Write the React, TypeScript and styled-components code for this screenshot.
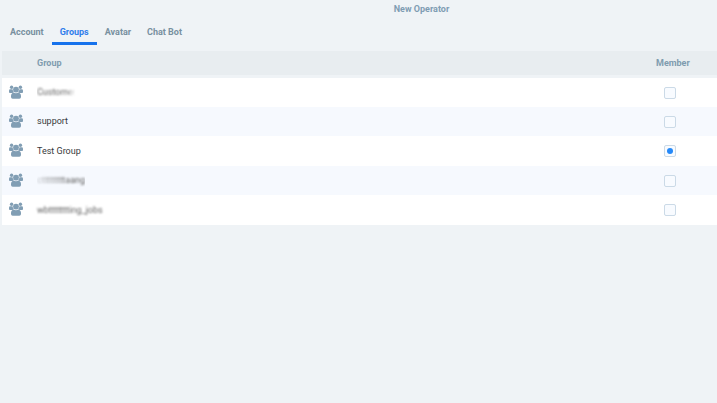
import React, { useState } from "react";
import styled, { createGlobalStyle } from "styled-components";

const GlobalStyle = createGlobalStyle`
  body {
    margin: 0;
    background: #eff3f6;
    font-family: Roboto, sans-serif;
    font-size: 9px;
  }
`;

const Page = styled.main`
  display: flex;
  flex-direction: column;
  overflow-x: hidden;
`;

const Title = styled.h1`
  margin: 0;
  padding: 3px 0 0 126px;
  font-size: 9px;
  line-height: 13px;
  font-weight: 700;
  text-align: center;
  color: #7f9db3;
`;

const Tabs = styled.nav`
  display: flex;
  padding: 4px 0 0 2px;
`;

const Tab = styled.button<{ $active: boolean }>`
  padding: 6px 8px 3px;
  border: 0;
  border-bottom: 3px solid ${(p) => (p.$active ? "#1672ec" : "transparent")};
  background: none;
  font: 700 9px/13px Roboto, sans-serif;
  color: ${(p) => (p.$active ? "#2f7deb" : "#78909f")};
  cursor: pointer;
`;

const Table = styled.table`
  width: calc(100% - 2px);
  margin: 6px 0 0 2px;
  border-collapse: separate;
  border-spacing: 0;
  table-layout: fixed;
`;

const HeadCell = styled.th<{ $width?: number }>`
  width: ${(p) => (p.$width ? `${p.$width}px` : "auto")};
  height: 24px;
  padding: 0;
  border-bottom: 3px solid #eff3f6;
  background: #e8edf0;
  color: #7f9caf;
  font-weight: 700;
  text-align: left;
`;

const Row = styled.tr<{ $tall: boolean }>`
  height: ${(p) => (p.$tall ? 30 : 29)}px;
  background: #fff;
  &:nth-child(even) {
    background: #f6f9fe;
  }
`;

const Cell = styled.td`
  padding: 0;
  line-height: 13px;
  color: #38393b;
`;

const IconCell = styled(Cell)`
  padding: 0 0 2px 7px;
`;

const MemberCell = styled(Cell)`
  padding-left: 8px;
`;

const Label = styled.label`
  display: inline-block;
`;

const Masked = styled(Label)<{ $fade: string }>`
  color: #606060;
  filter: blur(1px);
  mask-image: ${(p) => p.$fade};
`;

const Check = styled.input`
  appearance: none;
  display: grid;
  place-items: center;
  box-sizing: border-box;
  width: 12px;
  height: 12px;
  margin: 0;
  border: 1px solid #cbdae7;
  border-radius: 2px;
  background: #f8fbff;
  &:checked::before {
    content: "";
    width: 6px;
    height: 6px;
    border-radius: 50%;
    background: #2589f8;
  }
`;

const Icon = styled.svg`
  display: block;
  width: 14px;
  height: 14px;
  fill: #819eb4;
`;

const GroupIcon = () => (
  <Icon viewBox="0 0 14 14" aria-hidden="true">
    <circle cx="2.6" cy="2.3" r="1.7" />
    <circle cx="11.4" cy="2.3" r="1.7" />
    <path d="M0 6.900V5.700Q0 4.300 1.300 4.300h2.200q.2 1.800 1.400 2.800l-1.300.8H.9Q0 7.900 0 6.900zM14 6.900V5.700q0-1.400-1.300-1.400h-2.200q-.2 1.800-1.400 2.800l1.300.8h2.700q.9 0 .9-1z" />
    <circle cx="7" cy="4.600" r="2.900" />
    <path d="M4.700 7.500Q7 9 9.300 7.500q2.700.5 2.700 3.500v1q0 1.700-1.700 1.700H3.700Q2 13.700 2 12v-1q0-3 2.700-3.500z" />
  </Icon>
);

const groups = [
  { name: "Customer", fade: "linear-gradient(90deg, #000 75%, transparent)" },
  { name: "support" },
  { name: "Test Group" },
  { name: "cttttttttaang", fade: "linear-gradient(90deg, rgba(0,0,0,.3), #000 70%)" },
  { name: "wbttttttting_jobs", fade: "none" },
];

const tabs = ["Account", "Groups", "Avatar", "Chat Bot"];

export default function App() {
  const [active, setActive] = useState("Groups");
  const [members, setMembers] = useState<string[]>(["Test Group"]);

  const toggle = (name: string) =>
    setMembers((list) =>
      list.includes(name) ? list.filter((n) => n !== name) : [...list, name]
    );

  return (
    <Page>
      <GlobalStyle />
      <Title>New Operator</Title>
      <Tabs>
        {tabs.map((tab) => (
          <Tab key={tab} $active={tab === active} onClick={() => setActive(tab)}>
            {tab}
          </Tab>
        ))}
      </Tabs>
      <Table>
        <thead>
          <tr>
            <HeadCell $width={35} />
            <HeadCell>Group</HeadCell>
            <HeadCell $width={61}>Member</HeadCell>
          </tr>
        </thead>
        <tbody>
          {groups.map((g, i) => {
            const id = `group-${i}`;
            return (
              <Row key={g.name} $tall={i === 2 || i === 4}>
                <IconCell>
                  <GroupIcon />
                </IconCell>
                <Cell>
                  {g.fade ? (
                    <Masked htmlFor={id} $fade={g.fade}>
                      {g.name}
                    </Masked>
                  ) : (
                    <Label htmlFor={id}>{g.name}</Label>
                  )}
                </Cell>
                <MemberCell>
                  <Check
                    id={id}
                    type="checkbox"
                    checked={members.includes(g.name)}
                    onChange={() => toggle(g.name)}
                  />
                </MemberCell>
              </Row>
            );
          })}
        </tbody>
      </Table>
    </Page>
  );
}
